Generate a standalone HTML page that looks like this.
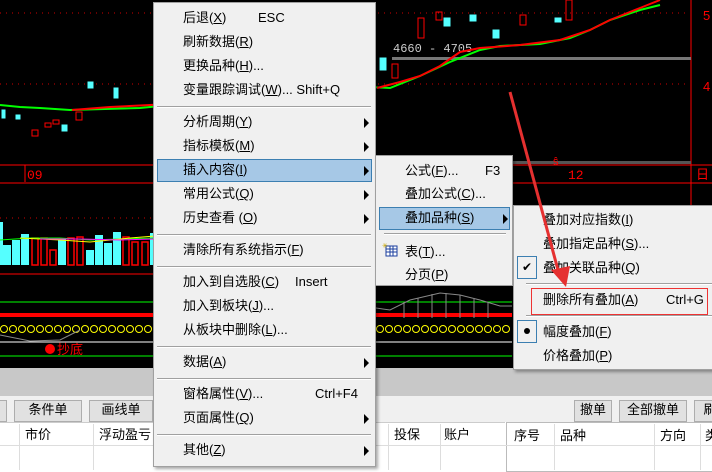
<!DOCTYPE html><html><head><meta charset="utf-8"><style>
body{margin:0;width:712px;height:470px;overflow:hidden;position:relative;background:#fff;font-family:"Liberation Sans","Noto Sans CJK SC",sans-serif;font-size:13px;color:#000}
.a{position:absolute}
.menu{position:absolute;background:#f0f0f0;border:1px solid #a0a0a0;box-shadow:2px 2px 3px rgba(0,0,0,.35)}
.it{position:absolute;white-space:nowrap;line-height:16px}
.sep{position:absolute;height:1px;background:#a0a0a0;border-bottom:1px solid #fff}
.hl{position:absolute;background:#a6c8e6;border:1px solid #3c7fb1}
.ar{position:absolute;width:0;height:0;border-top:5px solid transparent;border-bottom:5px solid transparent;border-left:5px solid #000}
.btn{position:absolute;background:#e1e1e1;border:1px solid #adadad;text-align:center;line-height:18px;font-size:13px}
</style></head><body>
<div class="a" style="left:0;top:0;width:712px;height:368px;background:#000"></div>
<svg class="a" style="left:0;top:0" width="712" height="368">
<g stroke="#c00" stroke-dasharray="1,5"><line x1="0" y1="13" x2="690" y2="13"/><line x1="0" y1="84" x2="690" y2="84"/><line x1="0" y1="218" x2="690" y2="218"/></g>
<line x1="0" y1="165" x2="712" y2="165" stroke="#f00"/><line x1="0" y1="183" x2="712" y2="183" stroke="#f00"/>
<line x1="691" y1="0" x2="691" y2="368" stroke="#f00"/>
<line x1="25" y1="165" x2="25" y2="182" stroke="#f00"/>
<text x="27" y="179" fill="#f00" font-family="Liberation Mono" font-size="13">09</text>
<text x="568" y="179" fill="#f00" font-family="Liberation Mono" font-size="13">12</text>
<text x="696" y="179" fill="#f00" font-size="13">日</text>
<text x="703" y="20" fill="#f00" font-size="13">5</text><text x="703" y="91" fill="#f00" font-size="13">4</text>
<rect x="392" y="57" width="299" height="3" fill="#777"/>
<rect x="500" y="161" width="191" height="3" fill="#555"/>
<text x="393" y="52" fill="#ccc" font-family="Liberation Mono" font-size="12">4660 - 4705</text>
<polyline points="0,105 20,107 40,108 70,110 105,109 140,108 180,104 230,100 290,95 370,87 390,88 420,76 450,62 480,50 500,46 540,44 570,38 590,30 610,20 640,10 660,5" fill="none" stroke="#00ff00" stroke-width="2"/>
<polyline points="72,110 110,107 150,105 200,102 250,96 300,93 340,88 372,86" fill="none" stroke="#f00" stroke-width="2"/>
<polyline points="377,88 400,82 420,76 440,66 460,52 480,48 520,45 560,40 590,30 610,20 640,8 660,0" fill="none" stroke="#f00" stroke-width="2"/>
<g fill="#55ffff" stroke="#55ffff"><rect x="88" y="82" width="5" height="6"/><rect x="114" y="88" width="4" height="10"/><rect x="2" y="110" width="3" height="8"/><rect x="16" y="115" width="4" height="4"/><rect x="62" y="125" width="5" height="6"/><rect x="380" y="58" width="6" height="12"/><rect x="444" y="18" width="6" height="8"/><rect x="470" y="15" width="6" height="6"/><rect x="493" y="30" width="6" height="8"/><rect x="555" y="18" width="6" height="4"/></g>
<g fill="none" stroke="#f00"><rect x="32" y="130" width="6" height="6"/><rect x="45" y="123" width="6" height="4"/><rect x="53" y="120" width="6" height="4"/><rect x="76" y="112" width="6" height="8"/><rect x="392" y="64" width="6" height="14"/><rect x="418" y="18" width="6" height="20"/><rect x="436" y="12" width="6" height="8"/><rect x="520" y="15" width="6" height="10"/><rect x="566" y="0" width="6" height="20"/></g>
<g fill="#55ffff"><rect x="0" y="222" width="3" height="43"/><rect x="3" y="245" width="8" height="20"/><rect x="12" y="240" width="8" height="25"/><rect x="21" y="234" width="8" height="31"/><rect x="58" y="238" width="8" height="27"/><rect x="86" y="250" width="8" height="15"/><rect x="95" y="235" width="8" height="30"/><rect x="104" y="243" width="8" height="22"/><rect x="113" y="232" width="8" height="33"/><rect x="150" y="233" width="8" height="32"/></g>
<g fill="none" stroke="#f00" stroke-width="1.5"><rect x="32" y="238" width="6" height="27"/><rect x="41" y="238" width="6" height="27"/><rect x="50" y="250" width="6" height="15"/><rect x="68" y="238" width="6" height="27"/><rect x="77" y="237" width="6" height="28"/><rect x="123" y="237" width="6" height="28"/><rect x="132" y="242" width="6" height="23"/><rect x="142" y="242" width="6" height="23"/></g>
<polyline points="0,240 30,238 60,238 90,240 120,239 155,238" fill="none" stroke="#0f0"/>
<polyline points="20,238 60,240 90,242 130,238 155,236" fill="none" stroke="#ff0"/>
<polyline points="40,239 80,239 120,240 155,239" fill="none" stroke="#f0f"/>
<line x1="0" y1="274" x2="712" y2="274" stroke="#f00"/>
<line x1="0" y1="302" x2="512" y2="302" stroke="#0f0"/>
<rect x="0" y="313" width="512" height="4" fill="#f00"/>
<line x1="0" y1="342" x2="512" y2="342" stroke="#fff"/>
<line x1="0" y1="356" x2="512" y2="356" stroke="#0f0"/>
<g fill="none" stroke="#ff0">
<circle cx="4" cy="329" r="3.5"/><circle cx="13" cy="329" r="3.5"/><circle cx="22" cy="329" r="3.5"/><circle cx="31" cy="329" r="3.5"/><circle cx="40" cy="329" r="3.5"/><circle cx="49" cy="329" r="3.5"/><circle cx="58" cy="329" r="3.5"/><circle cx="67" cy="329" r="3.5"/><circle cx="76" cy="329" r="3.5"/><circle cx="85" cy="329" r="3.5"/><circle cx="94" cy="329" r="3.5"/><circle cx="103" cy="329" r="3.5"/><circle cx="112" cy="329" r="3.5"/><circle cx="121" cy="329" r="3.5"/><circle cx="130" cy="329" r="3.5"/><circle cx="139" cy="329" r="3.5"/><circle cx="148" cy="329" r="3.5"/>
<circle cx="380" cy="329" r="3.5"/><circle cx="389" cy="329" r="3.5"/><circle cx="398" cy="329" r="3.5"/><circle cx="407" cy="329" r="3.5"/><circle cx="416" cy="329" r="3.5"/><circle cx="425" cy="329" r="3.5"/><circle cx="434" cy="329" r="3.5"/><circle cx="443" cy="329" r="3.5"/><circle cx="452" cy="329" r="3.5"/><circle cx="461" cy="329" r="3.5"/><circle cx="470" cy="329" r="3.5"/><circle cx="479" cy="329" r="3.5"/><circle cx="488" cy="329" r="3.5"/><circle cx="497" cy="329" r="3.5"/><circle cx="506" cy="329" r="3.5"/></g>
<polyline points="0,335 30,341 60,340 80,330" fill="none" stroke="#888"/>
<polyline points="376,308 390,310 410,300 440,293 460,295 480,300 500,306 512,306" fill="none" stroke="#888"/>
<g stroke="#888"><line x1="404" y1="302" x2="404" y2="318"/><line x1="418" y1="298" x2="418" y2="318"/><line x1="432" y1="294" x2="432" y2="318"/><line x1="446" y1="293" x2="446" y2="318"/><line x1="460" y1="295" x2="460" y2="318"/><line x1="474" y1="298" x2="474" y2="318"/><line x1="488" y1="302" x2="488" y2="318"/></g>
<circle cx="50" cy="349" r="5" fill="#f00"/><text x="57" y="354" fill="#f00" font-size="13">抄底</text>
<text x="553" y="165" fill="#f00" font-size="11">ŝ</text>
</svg>
<div class="a" style="left:0;top:368px;width:712px;height:28px;background:#c8c8c8"></div>
<div class="a" style="left:0;top:396px;width:712px;height:26px;background:#f0f0f0"></div>
<div class="btn" style="left:-2px;top:400px;width:7px;height:20px"></div>
<div class="btn" style="left:14px;top:400px;width:66px;height:20px">条件单</div>
<div class="btn" style="left:89px;top:400px;width:62px;height:20px">画线单</div>
<div class="btn" style="left:574px;top:400px;width:36px;height:20px">撤单</div>
<div class="btn" style="left:619px;top:400px;width:66px;height:20px">全部撤单</div>
<div class="btn" style="left:694px;top:400px;width:30px;height:20px">刷</div>
<div class="a" style="left:0;top:422px;width:505px;height:48px;background:#fff;border-top:1px solid #ccc"></div>
<div class="a" style="left:506px;top:422px;width:206px;height:48px;background:#fff;border:1px solid #bbb"></div>
<div class="a" style="left:0;top:445px;width:712px;height:1px;background:#ddd"></div>
<div class="a" style="left:19px;top:424px;width:1px;height:46px;background:#ddd"></div>
<div class="a" style="left:93px;top:424px;width:1px;height:46px;background:#ddd"></div>
<div class="a" style="left:388px;top:424px;width:1px;height:46px;background:#ddd"></div>
<div class="a" style="left:440px;top:424px;width:1px;height:46px;background:#ddd"></div>
<div class="a" style="left:554px;top:424px;width:1px;height:46px;background:#ddd"></div>
<div class="a" style="left:654px;top:424px;width:1px;height:46px;background:#ddd"></div>
<div class="a" style="left:700px;top:424px;width:1px;height:46px;background:#ddd"></div>
<div class="it" style="left:25px;top:427px">市价</div><div class="it" style="left:99px;top:427px">浮动盈亏</div>
<div class="it" style="left:394px;top:427px">投保</div><div class="it" style="left:444px;top:427px">账户</div>
<div class="it" style="left:514px;top:428px">序号</div><div class="it" style="left:560px;top:428px">品种</div><div class="it" style="left:660px;top:428px">方向</div><div class="it" style="left:705px;top:428px">类</div>

<div class="menu" style="left:153px;top:2px;width:221px;height:463px">
<div class="hl" style="left:3px;top:156px;width:213px;height:21px"></div>
<div class="it" style="left:29px;top:7px">后退(<u>X</u>)</div><div class="it" style="left:104px;top:7px">ESC</div>
<div class="it" style="left:29px;top:31px">刷新数据(<u>R</u>)</div>
<div class="it" style="left:29px;top:55px">更换品种(<u>H</u>)...</div>
<div class="it" style="left:29px;top:79px">变量跟踪调试(<u>W</u>)... Shift+Q</div>
<div class="sep" style="left:3px;top:103px;width:214px"></div>
<div class="it" style="left:29px;top:111px">分析周期(<u>Y</u>)</div><div class="ar" style="left:210px;top:115px"></div>
<div class="it" style="left:29px;top:135px">指标模板(<u>M</u>)</div><div class="ar" style="left:210px;top:139px"></div>
<div class="it" style="left:29px;top:159px">插入内容(<u>I</u>)</div><div class="ar" style="left:210px;top:163px"></div>
<div class="it" style="left:29px;top:183px">常用公式(<u>Q</u>)</div><div class="ar" style="left:210px;top:187px"></div>
<div class="it" style="left:29px;top:207px">历史查看 (<u>O</u>)</div><div class="ar" style="left:210px;top:211px"></div>
<div class="sep" style="left:3px;top:231px;width:214px"></div>
<div class="it" style="left:29px;top:239px">清除所有系统指示(<u>F</u>)</div>
<div class="sep" style="left:3px;top:263px;width:214px"></div>
<div class="it" style="left:29px;top:271px">加入到自选股(<u>C</u>)</div><div class="it" style="left:141px;top:271px">Insert</div>
<div class="it" style="left:29px;top:295px">加入到板块(<u>J</u>)...</div>
<div class="it" style="left:29px;top:319px">从板块中删除(<u>L</u>)...</div>
<div class="sep" style="left:3px;top:343px;width:214px"></div>
<div class="it" style="left:29px;top:351px">数据(<u>A</u>)</div><div class="ar" style="left:210px;top:355px"></div>
<div class="sep" style="left:3px;top:375px;width:214px"></div>
<div class="it" style="left:29px;top:383px">窗格属性(<u>V</u>)...</div><div class="it" style="left:161px;top:383px">Ctrl+F4</div>
<div class="it" style="left:29px;top:407px">页面属性(<u>Q</u>)</div><div class="ar" style="left:210px;top:411px"></div>
<div class="sep" style="left:3px;top:431px;width:214px"></div>
<div class="it" style="left:29px;top:439px">其他(<u>Z</u>)</div><div class="ar" style="left:210px;top:443px"></div>
</div>

<div class="menu" style="left:375px;top:155px;width:136px;height:129px">
<div class="hl" style="left:3px;top:51px;width:129px;height:21px"></div>
<div class="it" style="left:29px;top:7px">公式(<u>F</u>)...</div><div class="it" style="left:109px;top:7px">F3</div>
<div class="it" style="left:29px;top:30px">叠加公式(<u>C</u>)...</div>
<div class="it" style="left:29px;top:54px">叠加品种(<u>S</u>)</div><div class="ar" style="left:127px;top:58px"></div>
<div class="sep" style="left:8px;top:77px;width:122px"></div>
<svg class="a" style="left:6px;top:87px" width="16" height="14"><rect x="4" y="3" width="11" height="10" fill="#fff" stroke="#1a3d9e"/><g stroke="#1a3d9e"><line x1="4" y1="6" x2="15" y2="6"/><line x1="4" y1="9" x2="15" y2="9"/><line x1="8" y1="3" x2="8" y2="13"/><line x1="11" y1="3" x2="11" y2="13"/></g><text x="0" y="5" fill="#ca0" font-size="7">✳</text></svg>
<div class="it" style="left:29px;top:88px">表(<u>T</u>)...</div>
<div class="it" style="left:29px;top:111px">分页(<u>P</u>)</div>
</div>

<div class="menu" style="left:513px;top:205px;width:205px;height:163px">
<div class="it" style="left:29px;top:6px">叠加对应指数(<u>I</u>)</div>
<div class="it" style="left:29px;top:30px">叠加指定品种(<u>S</u>)...</div>
<div class="a" style="left:3px;top:50px;width:18px;height:21px;border:1px solid #3c7fb1;background:#f0f0f0;text-align:center;line-height:21px;font-size:12px">✔</div>
<div class="it" style="left:29px;top:54px">叠加关联品种(<u>Q</u>)</div>
<div class="sep" style="left:12px;top:77px;width:190px"></div>
<div class="a" style="left:17px;top:82px;width:175px;height:25px;border:1px solid #e33"></div>
<div class="it" style="left:29px;top:86px">删除所有叠加(<u>A</u>)</div><div class="it" style="left:152px;top:86px">Ctrl+G</div>
<div class="sep" style="left:12px;top:109px;width:190px"></div>
<div class="a" style="left:3px;top:114px;width:18px;height:21px;border:1px solid #3c7fb1;background:#f0f0f0"><div class="a" style="left:6px;top:7px;width:6px;height:6px;border-radius:3px;background:#000"></div></div>
<div class="it" style="left:29px;top:118px">幅度叠加(<u>F</u>)</div>
<div class="it" style="left:29px;top:142px">价格叠加(<u>P</u>)</div>
</div>

<svg class="a" style="left:0;top:0" width="712" height="470"><line x1="510" y1="92" x2="558" y2="270" stroke="#e53030" stroke-width="3"/><polygon points="551,270 570,266 566,287" fill="#e53030"/></svg>
</body></html>
